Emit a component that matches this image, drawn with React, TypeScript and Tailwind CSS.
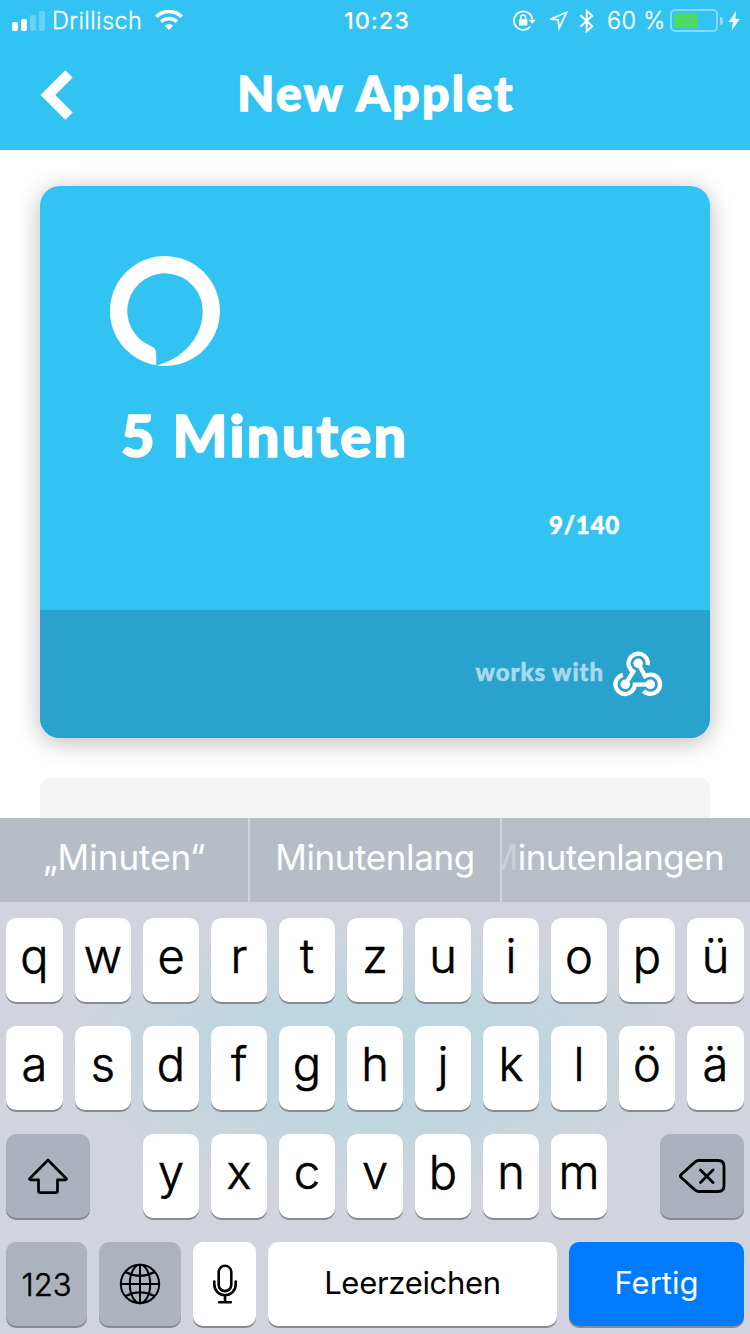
import type { ReactNode } from "react";
import clsx from "clsx";

const topRow = ["q", "w", "e", "r", "t", "z", "u", "i", "o", "p", "ü"];
const homeRow = ["a", "s", "d", "f", "g", "h", "j", "k", "l", "ö", "ä"];
const bottomRow = ["y", "x", "c", "v", "b", "n", "m"];

function StatusBar() {
  return (
    <div className="flex h-10 items-center pt-px text-[23.5px] leading-none">
      <div className="flex w-[344px] items-center pl-3">
        <div className="flex h-5 items-end gap-[3px]">
          <span className="h-[9px] w-1.5 rounded-xs bg-white" />
          <span className="h-3 w-1.5 rounded-xs bg-white" />
          <span className="h-4 w-1.5 rounded-xs bg-white/25" />
          <span className="h-5 w-1.5 rounded-xs bg-white/25" />
        </div>
        <span className="ml-[7px] w-[103px] font-light tracking-[0.4px] [-webkit-text-stroke:0.3px_white]">
          Drillisch
        </span>
        <svg
          className="-mt-0.5"
          width="28"
          height="20"
          viewBox="0 0 28 20"
          fill="none"
        >
          <path
            d="M1.3 6.8a18 18 0 0 1 25.4 0"
            stroke="white"
            strokeWidth="3.6"
          />
          <path
            d="M5.9 11.8a11.5 11.5 0 0 1 16.2 0"
            stroke="white"
            strokeWidth="3.4"
          />
          <path d="M14 20l-4.2-4.3a6 6 0 0 1 8.4 0z" fill="white" />
        </svg>
      </div>

      <span className="w-[168px] font-medium tracking-[0.9px]">10:23</span>

      <svg width="24" height="22" viewBox="0 0 24 22" fill="none">
        <path
          d="M18.2 16.6A9.2 9.2 0 1 1 20.3 9.2"
          stroke="white"
          strokeWidth="1.7"
        />
        <path d="M16.8 9.8h6.8l-3.4 4z" fill="white" />
        <rect x="7" y="9.2" width="8.4" height="6.3" rx="1" fill="white" />
        <path
          d="M8.8 9.6V7.4a2.4 2.4 0 0 1 4.8 0v2.2"
          stroke="white"
          strokeWidth="1.5"
        />
      </svg>
      <svg
        className="ml-3"
        width="21"
        height="21"
        viewBox="0 0 21 21"
        fill="none"
      >
        <path
          d="M2.2 9.2L18.6 2.2l-7.4 16-1.1-8.6z"
          stroke="white"
          strokeWidth="1.6"
        />
      </svg>
      <svg
        className="ml-2.5"
        width="16"
        height="24"
        viewBox="0 0 16 24"
        fill="none"
      >
        <path
          d="M1.4 6.3l11.8 11-5.4 4.9V1.8l5.4 4.9-11.8 11"
          stroke="white"
          strokeWidth="2"
        />
      </svg>
      <span className="ml-3 w-[63px] whitespace-nowrap font-light tracking-[0.3px] [-webkit-text-stroke:0.3px_white]">
        60 %
      </span>
      <div className="h-[23px] w-12 rounded-[5px] border-2 border-white/40 p-0.5">
        <div className="h-full w-6 rounded-[1px] bg-[#4cd964]" />
      </div>
      <span className="ml-0.5 h-2 w-[3px] rounded-r-full bg-white/45" />
      <svg className="ml-[5px]" width="12" height="20" viewBox="0 0 12 20">
        <path d="M8.2 0L0.5 11h4.4L3.6 19.6 11.8 8H7.3z" fill="white" />
      </svg>
    </div>
  );
}

function AlexaIcon() {
  return (
    <svg width="110" height="110" viewBox="0 0 110 110" fill="white">
      <path d="M46.2 109.3A55 55 0 1 1 55 110Q50.5 110 47 109.4C72 103 92.7 82 92.7 55A37.7 37.7 0 1 0 40 89.6C44.2 91.2 46.2 94 46.2 98.5Z" />
    </svg>
  );
}

function WebhookIcon() {
  return (
    <svg width="50" height="48" viewBox="0 0 50 48" fill="none">
      <g stroke="white" strokeWidth="4.3">
        <path d="M34.7 15.2A9.7 9.7 0 1 0 20.2 21.6L12.3 34.3" />
        <path d="M9.9 24.9A9.7 9.7 0 1 0 21.8 34.6L37.3 34.3" />
        <path d="M30.5 41.1A9.7 9.7 0 1 0 32 26.2L25.2 13.3" />
      </g>
      <g fill="white">
        <circle cx="25.2" cy="13.3" r="4.8" />
        <circle cx="12.3" cy="34.3" r="4.8" />
        <circle cx="37.3" cy="34.3" r="4.8" />
      </g>
    </svg>
  );
}

function Key({
  children,
  className = "w-14",
  color = "bg-white",
}: {
  children: ReactNode;
  className?: string;
  color?: string;
}) {
  return (
    <button
      type="button"
      className={clsx(
        "flex h-[84px] shrink-0 items-center justify-center rounded-[10px] shadow-[0_2px_0_#888b90]",
        color,
        className
      )}
    >
      {children}
    </button>
  );
}

function Letter({ children }: { children: ReactNode }) {
  return (
    <span className="pb-2.5 text-[47px] font-light leading-none [-webkit-text-stroke:0.6px_black]">
      {children}
    </span>
  );
}

function LetterRow({ letters }: { letters: string[] }) {
  return (
    <div className="flex gap-3">
      {letters.map((letter, i) => (
        <Key
          key={letter}
          className={i === 0 || i === letters.length - 1 ? "w-[57px]" : "w-14"}
        >
          <Letter>{letter}</Letter>
        </Key>
      ))}
    </div>
  );
}

function Keyboard() {
  return (
    <div className="h-[516px] bg-[#d1d4dc] bg-[radial-gradient(ellipse_310px_135px_at_375px_238px,#bad6e0_0%,#bfd6df_50%,#d1d4dc_100%)] font-['Inter',sans-serif] text-black">
      <div className="flex h-[84px] gap-0.5 text-[35px] leading-none text-white">
        <div className="flex w-[248px] items-center justify-center bg-[#b6bdc7] pb-1.5">
          <span>„Minuten“</span>
        </div>
        <div className="flex w-[250px] items-center justify-center bg-[#b6bdc7] pb-1.5">
          <span className="tracking-[-0.4px]">Minutenlang</span>
        </div>
        <div className="flex w-[248px] items-center justify-end overflow-hidden bg-[#b7bec7] pr-[26px] pb-1.5">
          <span className="tracking-[-0.6px]">
            <span className="text-white/30">M</span>inutenlangen
          </span>
        </div>
      </div>

      <div className="flex flex-col gap-6 px-1.5 pt-4">
        <LetterRow letters={topRow} />
        <LetterRow letters={homeRow} />

        <div className="flex justify-between">
          <Key className="w-[84px]" color="bg-[#abb2bd]">
            <svg width="42" height="38" viewBox="0 0 42 38" fill="none">
              <path
                d="M21 3L2.8 21.5q-.8 1.3.7 1.3h8V34q0 1.7 1.7 1.7h15.6q1.7 0 1.7-1.7V22.8h8q1.5 0 .7-1.3z"
                stroke="black"
                strokeWidth="2.7"
                strokeLinejoin="round"
              />
            </svg>
          </Key>
          <div className="flex gap-3">
            {bottomRow.map((letter) => (
              <Key key={letter}>
                <Letter>{letter}</Letter>
              </Key>
            ))}
          </div>
          <Key className="w-[84px]" color="bg-[#abb2bd]">
            <svg width="48" height="36" viewBox="0 0 48 36" fill="none">
              <path
                d="M20.5 2.5H40q6 0 6 6v19q0 6-6 6H20.5q-2 0-3.4-1.4L3 19.3q-1.2-1.3 0-2.6L17.1 3.9q1.4-1.4 3.4-1.4zM22.5 12L35 24.5M35 12L22.5 24.5"
                stroke="black"
                strokeWidth="2.8"
                strokeLinecap="round"
              />
            </svg>
          </Key>
        </div>

        <div className="flex gap-3">
          <Key className="w-[81px]" color="bg-[#acb3bd]">
            <span className="text-[31px] font-light leading-none [-webkit-text-stroke:0.5px_black]">
              123
            </span>
          </Key>
          <Key className="w-[82px]" color="bg-[#acb3bd]">
            <svg
              width="42"
              height="42"
              viewBox="0 0 42 42"
              fill="none"
              stroke="black"
              strokeWidth="2"
            >
              <circle cx="21" cy="21" r="19.2" />
              <ellipse cx="21" cy="21" rx="10.2" ry="19.2" />
              <path d="M21 1.8v38.4M1.8 21h38.4M6.5 9q14.5 7.5 29 0M6.5 33q14.5-7.5 29 0" />
            </svg>
          </Key>
          <Key className="w-[63px]">
            <svg
              width="26"
              height="40"
              viewBox="0 0 26 40"
              fill="none"
              stroke="black"
              strokeWidth="2.6"
              strokeLinecap="round"
            >
              <rect x="6.7" y="1.7" width="12.6" height="25.4" rx="6.3" />
              <path d="M2.3 17.5v3a10.7 10.7 0 0 0 21.4 0v-3M13 31.5v6.3M7.2 38.2h11.6" />
            </svg>
          </Key>
          <Key className="w-[289px] pb-[3px]">
            <span className="text-[31px] leading-none tracking-[-0.3px]">
              Leerzeichen
            </span>
          </Key>
          <Key className="w-[175px] pb-[3px]" color="bg-[#007aff]">
            <span className="text-[31px] leading-none text-white">Fertig</span>
          </Key>
        </div>
      </div>
    </div>
  );
}

export default function App() {
  return (
    <div className="flex h-[1334px] w-[750px] flex-col overflow-hidden bg-white font-['Inter',sans-serif] text-white">
      <header className="h-[150px] shrink-0 bg-[#33c3f3]">
        <StatusBar />
        <div className="grid h-[110px] grid-cols-[110px_1fr_110px] items-center">
          <button type="button" className="pl-10">
            <svg width="34" height="52" viewBox="0 0 34 52" fill="white">
              <path d="M.5 26L25.3 1.2l7.4 7.4L15.3 26l17.4 17.4-7.4 7.4z" />
            </svg>
          </button>
          <h1 className="pb-[5px] pl-0.5 text-center font-['Lato',sans-serif] text-[48px] font-black leading-none tracking-[2.4px] [-webkit-text-stroke:1.4px_white]">
            New Applet
          </h1>
        </div>
      </header>

      <main className="flex h-[668px] shrink-0 flex-col px-10 pt-9">
        <section className="flex h-[552px] shrink-0 flex-col overflow-hidden rounded-[20px] bg-[#33c3f3] font-['Lato',sans-serif] font-black shadow-[0_4px_24px_rgba(0,0,0,0.28)]">
          <div className="h-[424px] px-[70px] pt-[70px]">
            <AlexaIcon />
            <p className="mt-10 pl-[11px] text-[58px] leading-none tracking-[2.1px] [-webkit-text-stroke:1.6px_white]">
              5 Minuten
            </p>
            <p className="mt-[49px] pr-5 text-right text-[24px] leading-none tracking-[0.8px] [-webkit-text-stroke:0.5px_white]">
              9/140
            </p>
          </div>
          <div className="flex h-32 items-center justify-end bg-[#29a3ce] pr-[47px]">
            <span className="mr-[9px] pb-1 text-[24px] leading-none tracking-[0.9px] text-[#a9daeb] [-webkit-text-stroke:0.5px_#a9daeb]">
              works with
            </span>
            <WebhookIcon />
          </div>
        </section>
        <div className="mt-10 h-10 rounded-t-[10px] bg-[#f4f4f4]" />
      </main>

      <Keyboard />
    </div>
  );
}
